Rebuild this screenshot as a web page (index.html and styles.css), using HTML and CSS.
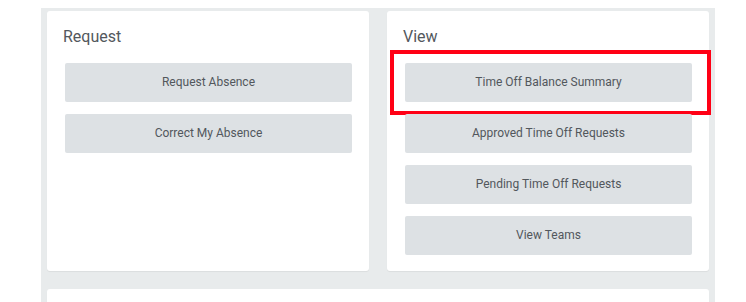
FILE: index.html
```html
<!DOCTYPE html>
<html>
<head>
<meta charset="utf-8">
<link rel="stylesheet" href="styles.css">
</head>
<body>
<div class="page">
  <div class="board">
    <div class="cards">
      <section class="card">
        <h2 class="card-title">Request</h2>
        <div class="buttons">
          <div class="btn">Request Absence</div>
          <div class="btn">Correct My Absence</div>
        </div>
      </section>
      <section class="card">
        <h2 class="card-title">View</h2>
        <div class="buttons">
          <div class="btn highlighted">Time Off Balance Summary</div>
          <div class="btn">Approved Time Off Requests</div>
          <div class="btn">Pending Time Off Requests</div>
          <div class="btn">View Teams</div>
        </div>
      </section>
    </div>
    <div class="card card-bottom"></div>
  </div>
</div>
</body>
</html>
```
FILE: styles.css
```css
html, body {
  margin: 0;
  padding: 0;
  background: #ffffff;
  width: 746px;
  height: 302px;
  overflow: hidden;
  font-family: Roboto, "Liberation Sans", Arial, sans-serif;
}
.page {
  padding-top: 8px;
  padding-left: 41px;
}
.board {
  width: 662px;
  height: 294px;
  background: #e8ebec;
  padding: 3px 6px 0 6px;
  display: flex;
  flex-direction: column;
  gap: 18px;
}
.cards {
  display: flex;
  gap: 18px;
}
.card {
  background: #ffffff;
  border-radius: 3px;
  box-shadow: 0 1px 1px rgba(0,0,0,0.06);
  width: 322px;
  height: 260px;
  box-sizing: border-box;
  padding: 0 17px 0 18px;
}
.card-title {
  margin: 0 0 0 -2px;
  padding-top: 16px;
  height: 36px;
  box-sizing: border-box;
  font-size: 16px;
  font-weight: 400;
  color: #53585d;
  line-height: 20px;
}
.buttons {
  margin-top: 16px;
  display: flex;
  flex-direction: column;
  gap: 12px;
}
.btn {
  height: 39px;
  box-sizing: border-box;
  padding-bottom: 2px;
  background: #dde1e4;
  border-radius: 2px;
  display: flex;
  align-items: center;
  justify-content: center;
  font-size: 12px;
  color: #52575c;
  position: relative;
}
.highlighted::after {
  content: "";
  position: absolute;
  left: -15px;
  top: -13px;
  width: 313px;
  height: 57px;
  border: 4px solid #ff0015;
}
.card-bottom {
  width: 662px;
  height: 40px;
  border-radius: 3px 3px 0 0;
}
```
